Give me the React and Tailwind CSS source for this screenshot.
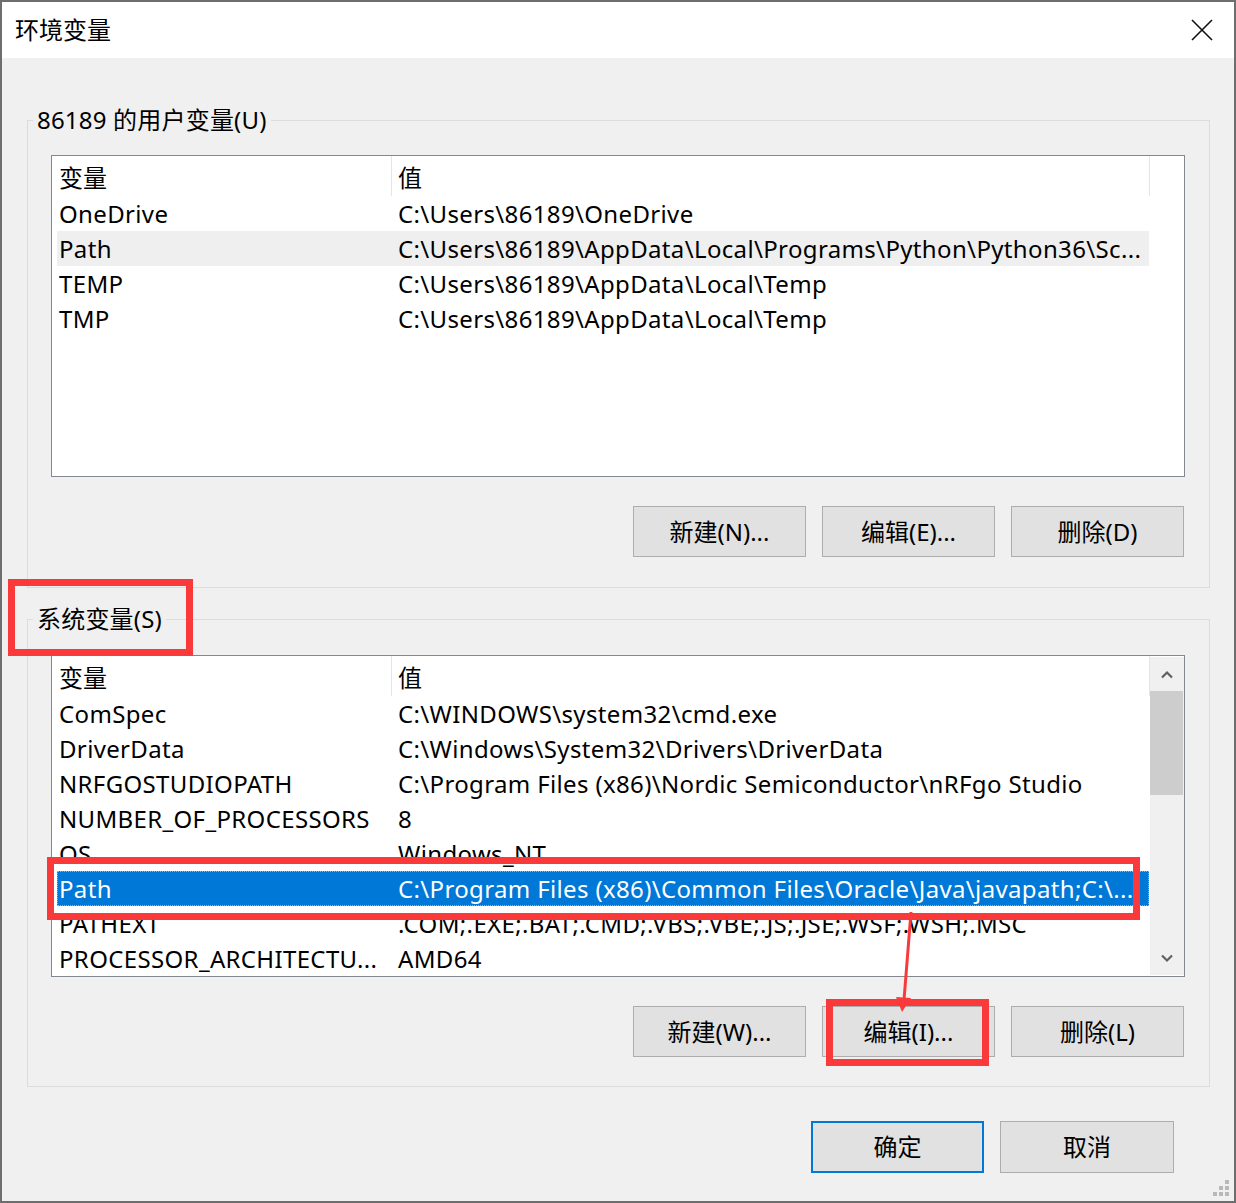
import React from "react";

const userRows = [
  ["OneDrive", "C:\\Users\\86189\\OneDrive", ""],
  ["Path", "C:\\Users\\86189\\AppData\\Local\\Programs\\Python\\Python36\\Sc...", "hover"],
  ["TEMP", "C:\\Users\\86189\\AppData\\Local\\Temp", ""],
  ["TMP", "C:\\Users\\86189\\AppData\\Local\\Temp", ""],
];

const sysRows = [
  ["ComSpec", "C:\\WINDOWS\\system32\\cmd.exe", ""],
  ["DriverData", "C:\\Windows\\System32\\Drivers\\DriverData", ""],
  ["NRFGOSTUDIOPATH", "C:\\Program Files (x86)\\Nordic Semiconductor\\nRFgo Studio", ""],
  ["NUMBER_OF_PROCESSORS", "8", ""],
  ["OS", "Windows_NT", ""],
  ["Path", "C:\\Program Files (x86)\\Common Files\\Oracle\\Java\\javapath;C:\\...", "sel"],
  ["PATHEXT", ".COM;.EXE;.BAT;.CMD;.VBS;.VBE;.JS;.JSE;.WSF;.WSH;.MSC", ""],
  ["PROCESSOR_ARCHITECTU...", "AMD64", ""],
];

function Row({ name, value, state }) {
  let cls = "";
  if (state === "sel")
    cls = "bg-[#0078d7] text-white outline outline-1 outline-dotted outline-[#f0a43c] -outline-offset-1";
  if (state === "hover") cls = "bg-[#efefef]";
  return (
    <div className={"flex h-[35px] w-[1092px] ml-[5px] items-center tracking-[0.35px] " + cls}>
      <div className="w-[338px] pl-[2px] whitespace-nowrap overflow-hidden">{name}</div>
      <div className="flex-1 pl-[3px] whitespace-nowrap overflow-hidden">{value}</div>
    </div>
  );
}

function Header() {
  return (
    <div className="flex h-[40px] w-[1098px]">
      <div className="w-[340px] pl-[7px] pt-[4px] flex items-center border-r border-[#e5e5e5]">变量</div>
      <div className="w-[758px] pl-[6px] pt-[4px] flex items-center border-r border-[#e5e5e5]">值</div>
    </div>
  );
}

function Chevron({ up }) {
  return (
    <svg width="14" height="9" viewBox="0 0 14 9">
      <polyline
        points={up ? "2,7.5 7,2.5 12,7.5" : "2,1.5 7,6.5 12,1.5"}
        fill="none"
        stroke="#606060"
        strokeWidth="2.2"
      />
    </svg>
  );
}

function Button({ children }) {
  return (
    <div className="w-[173px] h-[51px] flex items-center justify-center bg-[#e1e1e1] border border-[#adadad]">
      {children}
    </div>
  );
}

function Group({ label, children, mt }) {
  return (
    <div className={"relative w-[1183px] h-[468px] border border-[#dcdcdc] " + mt}>
      <div className="absolute left-[5px] top-[-17px] px-[4px] bg-[#f0f0f0] leading-[32px] tracking-[0.2px]">{label}</div>
      {children}
    </div>
  );
}

export default function App() {
  return (
    <div className="relative w-[1236px] h-[1203px] border-2 border-[#6e6e6e] bg-[#f0f0f0] text-black text-[24px] font-['Noto_Sans','Noto_Sans_CJK_SC',sans-serif] flex flex-col overflow-hidden">
      {/* title bar */}
      <div className="h-[56px] bg-white flex items-center justify-between pl-[13px] pr-[21px] shrink-0">
        <span className="leading-none">环境变量</span>
        <svg width="22" height="22" viewBox="0 0 22 22">
          <path d="M1 1 L21 21 M21 1 L1 21" stroke="#111" strokeWidth="1.6" />
        </svg>
      </div>

      <div className="flex flex-col pl-[25px]">
        {/* user variables */}
        <Group label="86189 的用户变量(U)" mt="mt-[62px]">
          <div className="ml-[23px] mt-[34px] w-[1134px] h-[322px] border border-[#828790] bg-white">
            <Header />
            {userRows.map(([n, v, s]) => (
              <Row key={n} name={n} value={v} state={s} />
            ))}
          </div>
          <div className="ml-[23px] w-[1133px] mt-[29px] flex justify-end gap-[16px]">
            <Button>新建(N)...</Button>
            <Button>编辑(E)...</Button>
            <Button>删除(D)</Button>
          </div>
        </Group>

        {/* system variables */}
        <Group label="系统变量(S)" mt="mt-[31px]">
          <div className="ml-[23px] mt-[35px] w-[1134px] h-[322px] border border-[#828790] bg-white flex">
            <div className="w-[1098px] overflow-hidden">
              <Header />
              {sysRows.map(([n, v, s]) => (
                <Row key={n} name={n} value={v} state={s} />
              ))}
            </div>
            <div className="w-[34px] my-[1px] bg-[#f0f0f0] flex flex-col items-center">
              <div className="h-[34px] w-full flex items-center justify-center">
                <Chevron up />
              </div>
              <div className="w-[33px] self-start h-[104px] bg-[#cdcdcd]" />
              <div className="flex-1" />
              <div className="h-[34px] w-full flex items-center justify-center">
                <Chevron />
              </div>
            </div>
          </div>
          <div className="ml-[23px] w-[1133px] mt-[29px] flex justify-end gap-[16px]">
            <Button>新建(W)...</Button>
            <Button>编辑(I)...</Button>
            <Button>删除(L)</Button>
          </div>
        </Group>

        {/* OK / Cancel */}
        <div className="mt-[34px] flex justify-end gap-[16px] pr-[60px]">
          <div className="w-[173px] h-[52px] flex items-center justify-center bg-[#e1e1e1] border-2 border-[#0078d7]">确定</div>
          <div className="w-[174px] h-[52px] flex items-center justify-center bg-[#e1e1e1] border border-[#adadad]">取消</div>
        </div>
      </div>

      {/* resize grip */}
      <svg className="absolute right-[4px] bottom-[4px]" width="18" height="18" viewBox="0 0 18 18">
        <g fill="#b8b8b8">
          <rect x="13" y="1" width="4" height="4" />
          <rect x="7" y="7" width="4" height="4" />
          <rect x="13" y="7" width="4" height="4" />
          <rect x="1" y="13" width="4" height="4" />
          <rect x="7" y="13" width="4" height="4" />
          <rect x="13" y="13" width="4" height="4" />
        </g>
      </svg>

      {/* red annotations */}
      <div className="absolute left-[6px] top-[577px] w-[185px] h-[77px] border-[7px] border-[#fa3a3a]" />
      <div className="absolute left-[45px] top-[855px] w-[1093px] h-[63px] border-[7px] border-[#fa3a3a]" />
      <div className="absolute left-[824px] top-[997px] w-[163px] h-[67px] border-[7px] border-[#fa3a3a]" />
      <svg className="absolute left-0 top-0 pointer-events-none" width="1236" height="1203">
        <line x1="909" y1="910" x2="902" y2="998" stroke="#fa3a3a" strokeWidth="3" />
        <polygon points="894,995 909,996 900,1010" fill="#fa3a3a" />
      </svg>
    </div>
  );
}
